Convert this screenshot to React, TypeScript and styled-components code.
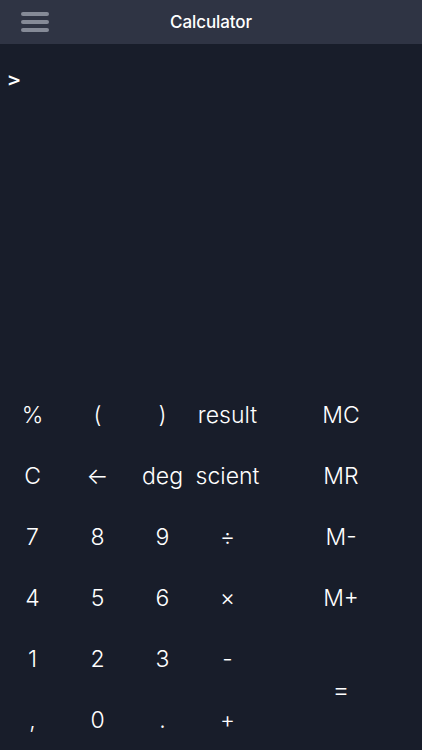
import React from "react";
import styled, { createGlobalStyle } from "styled-components";

const Global = createGlobalStyle`
  html, body { margin: 0; padding: 0; background: #181d2a; }
  body { font-family: Inter, "Noto Sans", sans-serif; }
`;

const Screen = styled.div`
  width: 422px;
  height: 750px;
  display: flex;
  flex-direction: column;
  background: #181d2a;
  color: #ffffff;
  overflow: hidden;
`;

const Header = styled.header`
  height: 44px;
  flex: none;
  background: #2f3444;
  display: grid;
  grid-template-columns: 70px 1fr 70px;
  align-items: center;
`;

const MenuButton = styled.div`
  justify-self: start;
  margin-left: 21px;
  display: flex;
  flex-direction: column;
  gap: 4px;
`;

const MenuLine = styled.span`
  display: block;
  width: 28px;
  height: 4px;
  border-radius: 2px;
  background: #858a97;
`;

const Title = styled.h1`
  margin: 0;
  text-align: center;
  font-size: 17px;
  font-weight: 500;
  letter-spacing: -0.1px;
`;

const Display = styled.div`
  flex: 1;
  padding: 26px 0 0 7px;
`;

const Prompt = styled.span`
  font-family: "DejaVu Sans", sans-serif;
  font-weight: 700;
  font-size: 17px;
  line-height: 1;
`;

const Keypad = styled.div`
  flex: none;
  height: 366px;
  display: grid;
  grid-template-columns: 65px 65px 65px 65px 162px;
  grid-template-rows: repeat(6, 61px);
`;

const Key = styled.div<{ $tall?: boolean }>`
  display: flex;
  align-items: center;
  justify-content: center;
  font-size: 23px;
  font-weight: 300;
  ${(p) => (p.$tall ? "grid-row: span 2; grid-column: 5; font-size: 26px;" : "")}
`;

const rows: string[][] = [
  ["%", "(", ")", "result", "MC"],
  ["C", "←", "deg", "scient", "MR"],
  ["7", "8", "9", "÷", "M-"],
  ["4", "5", "6", "×", "M+"],
  ["1", "2", "3", "-"],
  [",", "0", ".", "+"],
];

export default function App() {
  return (
    <Screen>
      <Global />
      <Header>
        <MenuButton>
          <MenuLine />
          <MenuLine />
          <MenuLine />
        </MenuButton>
        <Title>Calculator</Title>
        <span />
      </Header>
      <Display>
        <Prompt>&gt;</Prompt>
      </Display>
      <Keypad>
        {rows.slice(0, 4).map((r) => r.map((k) => <Key key={k}>{k}</Key>))}
        {rows[4].map((k) => (
          <Key key={k}>{k}</Key>
        ))}
        <Key $tall>=</Key>
        {rows[5].map((k) => (
          <Key key={k}>{k}</Key>
        ))}
      </Keypad>
    </Screen>
  );
}
